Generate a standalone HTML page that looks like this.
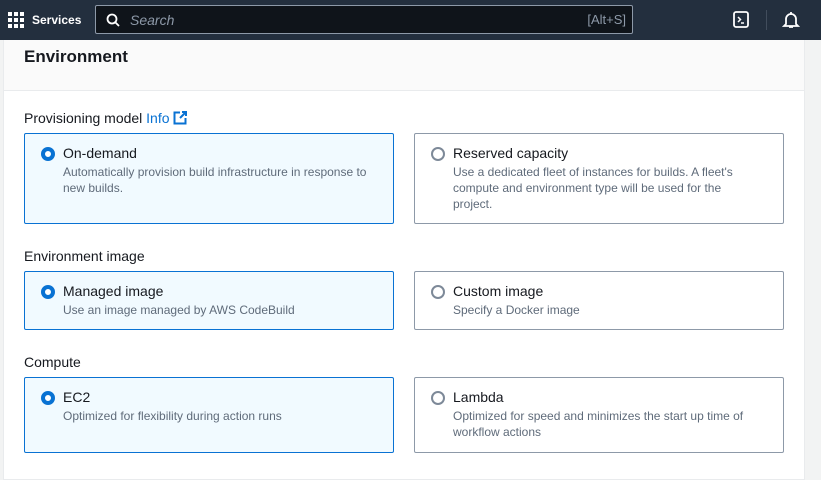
<!DOCTYPE html><html><head><style>
*{box-sizing:border-box;margin:0;padding:0}
body{width:821px;height:473px;overflow:hidden;background:#f2f3f3;font-family:"Liberation Sans",sans-serif;color:#16191f;position:relative}
.top{position:absolute;left:0;top:0;width:821px;height:40px;background:#232f3e}
.search{position:absolute;left:95px;top:5px;width:538px;height:29px;background:#0f141a;border:1px solid #8d99a8;border-radius:2px}
.panel{position:absolute;left:3px;top:40px;width:802px;height:440px;background:#fff;border:1px solid #e9ebed;border-top:none}
.ph{height:51px;background:#fafafa;border-bottom:1px solid #e9ebed}
.h{position:absolute;left:24px;top:47px;font-size:17px;font-weight:bold}
.lbl{position:absolute;left:24px;font-size:14px}
.card{position:absolute;width:370px;border:1px solid #8d99a8;border-radius:2px;background:#fff}
.card.sel{background:#f1faff;border-color:#0972d3}
.card .t{position:absolute;left:38px;top:11px;font-size:14px}
.card .d{position:absolute;left:38px;top:30px;font-size:12px;color:#5f6b7a;line-height:16px;width:308px}
.r{position:absolute;left:16px;top:13px;width:14px;height:14px;border-radius:50%;border:2px solid #7d8998;background:#fff}
.sel .r{border:4px solid #0972d3}
</style></head><body>
<div class="top">
<svg style="position:absolute;left:8px;top:12px" width="16" height="16"><g fill="#fff"><rect x="0" y="0" width="4" height="4"/><rect x="6" y="0" width="4" height="4"/><rect x="12" y="0" width="4" height="4"/><rect x="0" y="6" width="4" height="4"/><rect x="6" y="6" width="4" height="4"/><rect x="12" y="6" width="4" height="4"/><rect x="0" y="12" width="4" height="4"/><rect x="6" y="12" width="4" height="4"/><rect x="12" y="12" width="4" height="4"/></g></svg>
<div style="position:absolute;left:32px;top:13px;color:#fff;font-size:12px;font-weight:bold">Services</div>
<div class="search">
<svg style="position:absolute;left:10px;top:7px" width="14" height="14"><circle cx="6" cy="6" r="4.5" stroke="#fff" stroke-width="1.8" fill="none"/><path d="M9.5 9.5L13 13" stroke="#fff" stroke-width="1.8"/></svg>
<div style="position:absolute;left:34px;top:6px;color:#8d99a8;font-size:14px;font-style:italic">Search</div>
<div style="position:absolute;right:6px;top:6px;color:#8d99a8;font-size:13px">[Alt+S]</div>
</div>
<svg style="position:absolute;left:733px;top:11px" width="16" height="17"><rect x="1" y="1" width="14" height="15" rx="2" stroke="#fff" stroke-width="1.8" fill="none"/><path d="M5 6l2.5 2.5L5 11M8 12h3" stroke="#fff" stroke-width="1.5" fill="none"/></svg>
<div style="position:absolute;left:766px;top:10px;width:1px;height:20px;background:#414d5c"></div>
<svg style="position:absolute;left:782px;top:10px" width="18" height="19"><path d="M9 2v2M4 14V9a5 5 0 0 1 10 0v5l2 2H2z M7 17h4" stroke="#fff" stroke-width="1.8" fill="none"/></svg>
</div>
<div class="panel"><div class="ph"></div></div>
<div class="h">Environment</div>
<div class="lbl" style="top:110px">Provisioning model <span style="color:#0972d3">Info</span> <svg width="14" height="14" style="vertical-align:-2px"><path d="M7 1.5H1.5v11h11V7M9 1h4v4M13 1L7 7" stroke="#0972d3" stroke-width="2" fill="none"/></svg></div>
<div class="card sel" style="left:24px;top:133px;height:91px"><div class="r"></div><div class="t">On-demand</div><div class="d">Automatically provision build infrastructure in response to new builds.</div></div>
<div class="card" style="left:414px;top:133px;height:91px"><div class="r"></div><div class="t">Reserved capacity</div><div class="d">Use a dedicated fleet of instances for builds. A fleet's compute and environment type will be used for the project.</div></div>
<div class="lbl" style="top:248px">Environment image</div>
<div class="card sel" style="left:24px;top:271px;height:59px"><div class="r"></div><div class="t">Managed image</div><div class="d">Use an image managed by AWS CodeBuild</div></div>
<div class="card" style="left:414px;top:271px;height:59px"><div class="r"></div><div class="t">Custom image</div><div class="d">Specify a Docker image</div></div>
<div class="lbl" style="top:354px">Compute</div>
<div class="card sel" style="left:24px;top:377px;height:76px"><div class="r"></div><div class="t">EC2</div><div class="d">Optimized for flexibility during action runs</div></div>
<div class="card" style="left:414px;top:377px;height:76px"><div class="r"></div><div class="t">Lambda</div><div class="d">Optimized for speed and minimizes the start up time of workflow actions</div></div>
</body></html>
